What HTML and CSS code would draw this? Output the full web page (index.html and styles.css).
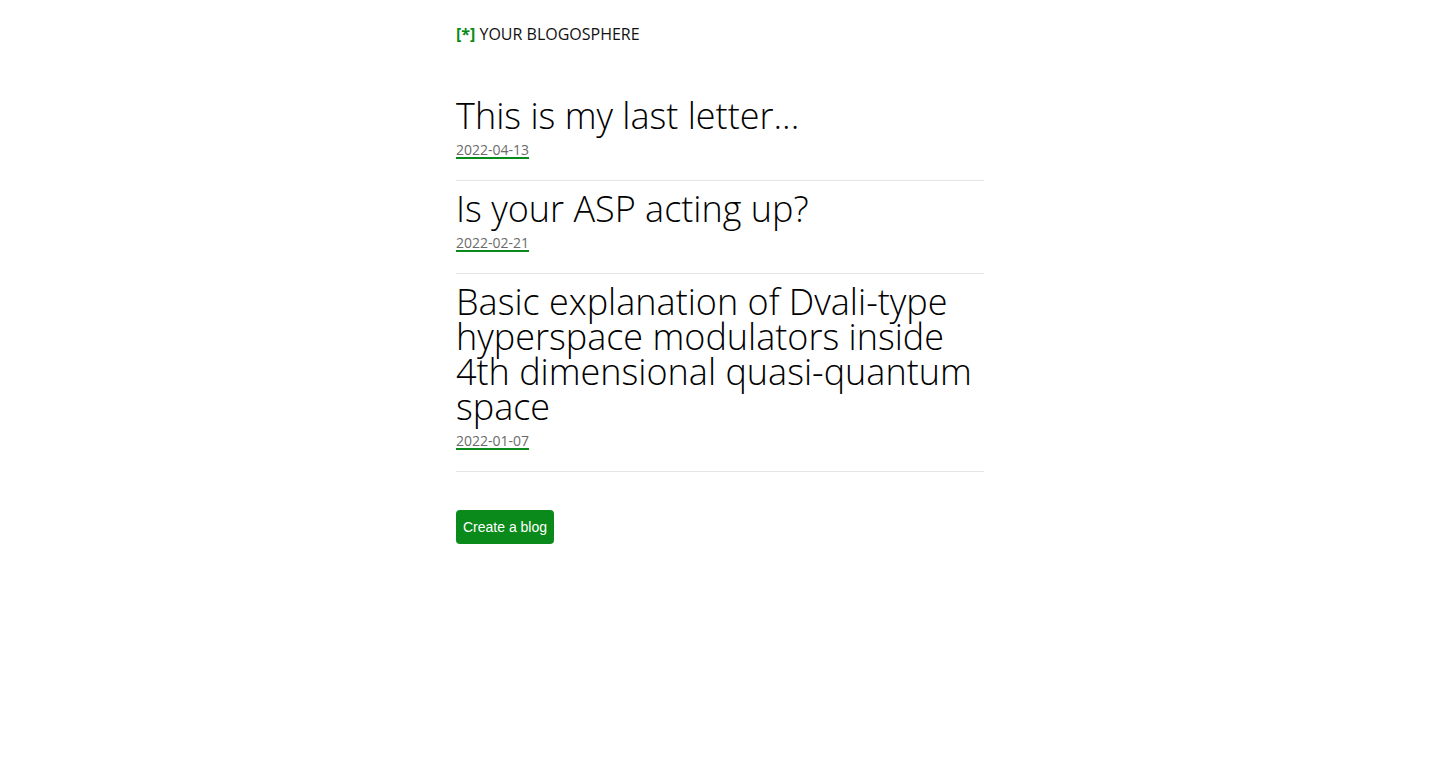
FILE: index.html
```html
<!DOCTYPE html>
<html lang="en">
<head>
<meta charset="utf-8">
<title>Your Blogosphere</title>
<link rel="stylesheet" href="styles.css">
</head>
<body>
<main class="page">
  <header class="site-header">
    <a class="brand" href="#"><span class="brand-mark">[*]</span> YOUR BLOGOSPHERE</a>
  </header>
  <section class="posts">
    <article class="post">
      <h2 class="post-title">This is my last letter...</h2>
      <a class="post-date" href="#">2022-04-13</a>
    </article>
    <article class="post">
      <h2 class="post-title">Is your ASP acting up?</h2>
      <a class="post-date" href="#">2022-02-21</a>
    </article>
    <article class="post">
      <h2 class="post-title">Basic explanation of Dvali-type hyperspace modulators inside 4th dimensional quasi-quantum space</h2>
      <a class="post-date" href="#">2022-01-07</a>
    </article>
  </section>
  <div class="actions">
    <button class="btn-create" type="button">Create a blog</button>
  </div>
</main>
</body>
</html>
```

FILE: styles.css
```css
html, body {
  margin: 0;
  padding: 0;
  background: #fff;
}
body {
  font-family: "Open Sans", "Noto Sans", sans-serif;
  color: #000;
}
.page {
  width: 528px;
  margin: 0 auto;
  padding-top: 23px;
}
.site-header {
  font-size: 16px;
  line-height: 22px;
}
.brand {
  color: #111;
  text-decoration: none;
}
.brand-mark {
  color: #0a8a1a;
  font-weight: 700;
}
.posts {
  margin-top: 43px;
}
.post {
  display: flex;
  flex-direction: column;
  align-items: flex-start;
  padding: 10px 0 20px;
  border-bottom: 1px solid #e6e6e6;
}
.post-title {
  margin: 0;
  font-size: 36px;
  font-weight: 300;
  line-height: 35px;
  color: #000;
}
.post-date {
  margin-top: 7px;
  font-size: 14px;
  line-height: 20px;
  color: #6b6b6b;
  text-decoration: underline;
  text-decoration-color: #0a8a1a;
  text-decoration-thickness: 2px;
  text-underline-offset: 2px;
}
.actions {
  margin-top: 38px;
}
.btn-create {
  font-family: "Liberation Sans", Arial, sans-serif;
  font-size: 14px;
  color: #fff;
  background: #0a8a1a;
  border: none;
  border-radius: 4px;
  height: 34px;
  padding: 0 7px;
}
```
